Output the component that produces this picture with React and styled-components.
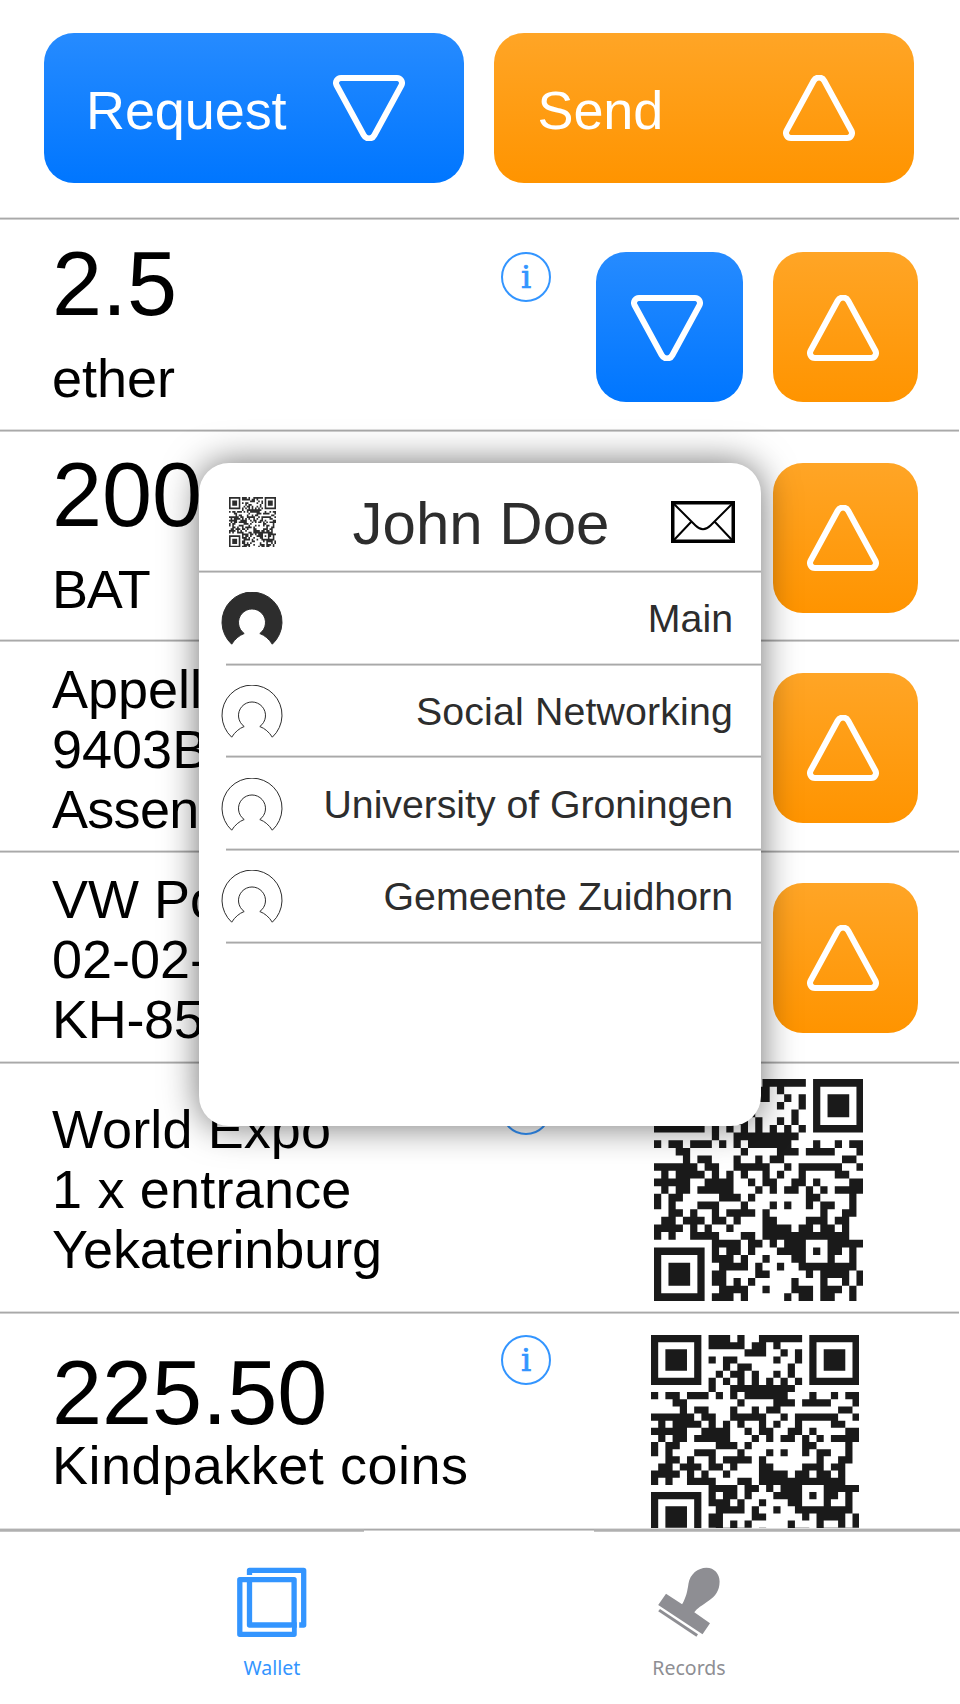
import React from "react";
import styled, { createGlobalStyle, css } from "styled-components";

const GlobalStyle = createGlobalStyle`
  * { box-sizing: border-box; }
  body {
    margin: 0;
    background: #fff;
    color: #000;
    font-family: "Liberation Sans", Arial, Helvetica, sans-serif;
  }
  svg { display: block; flex: none; }
`;

const hairline = css`
  content: "";
  display: block;
  height: 3px;
  background: linear-gradient(#dedede 1px, #a9a9a9 1px, #a9a9a9 2px, #cfcfcf 2px);
`;

const Screen = styled.div`
  position: relative;
  width: 960px;
  height: 1704px;
  overflow: hidden;
  display: flex;
  flex-direction: column;
  background: #fff;
`;

const Header = styled.header`
  flex: none;
  width: 959px;
  height: 220px;
  display: flex;
  flex-direction: column;
  &::after { ${hairline} }
`;

const HeaderActions = styled.div`
  flex: 1;
  display: flex;
  gap: 30px;
  padding: 33px 0 0 44px;
`;

const tones = {
  blue: "linear-gradient(#268bff, #0076ff)",
  orange: "linear-gradient(#ffa526, #ff9400)",
};

const Button = styled.button`
  border: 0;
  border-radius: 30px;
  background: ${(p) => tones[p.$tone]};
  color: #fff;
  font-family: inherit;
  display: flex;
  align-items: center;
`;

const WideButton = styled(Button)`
  width: 420px;
  height: 150px;
  padding: 0 59.5px 0 ${(p) => p.$inset}px;
  justify-content: space-between;
  font-size: 54px;
  line-height: 60px;
`;

const WideLabel = styled.span`
  padding-top: 3px;
  letter-spacing: -0.1px;
`;

const SquareButton = styled(Button)`
  width: ${(p) => p.$width}px;
  height: 150px;
  padding: 1px 6px 0 0;
  justify-content: center;
`;

const Row = styled.section`
  flex: none;
  width: 959px;
  height: ${(p) => p.$height}px;
  overflow: hidden;
  display: flex;
  flex-direction: column;
  &::after { ${(p) => !p.$last && hairline} }
`;

const RowBody = styled.div`
  flex: 1;
  min-height: 0;
  display: grid;
  grid-template-columns: 449px 50px 1fr;
  align-items: start;
  padding-left: 52px;
`;

const Info = styled.div`
  padding-top: ${(p) => p.$top}px;
`;

const Description = styled(Info)`
  white-space: nowrap;
`;

const Amount = styled.div`
  font-size: 90px;
  line-height: 100px;
  margin-bottom: ${(p) => p.$gap}px;
`;

const Line = styled.div`
  font-size: 54px;
  line-height: 60px;
  letter-spacing: ${(p) => p.$tracking || 0}px;
`;

const Actions = styled.div`
  display: flex;
  justify-content: flex-end;
  gap: 30px;
  padding: ${(p) => p.$top}px 41px 0 0;
`;

const CodeSlot = styled.div`
  padding: ${(p) => p.$top}px 0 0 ${(p) => p.$left}px;
`;

const InfoBadge = styled.span`
  width: 50px;
  height: 50px;
  border: 2px solid #3395ff;
  border-radius: 50%;
  display: flex;
  align-items: center;
  justify-content: center;
  color: #3395ff;
  font: 32px/46px "DejaVu Serif", serif;
  -webkit-text-stroke: 0.7px #3395ff;
`;

const TabBar = styled.nav`
  flex: 1;
  display: flex;
  flex-direction: column;
`;

const TabRule = styled.div`
  height: 4px;
  display: grid;
  grid-template-columns: 364px 230px 1fr;
  align-items: start;
`;

const RulePart = styled.i`
  height: ${(p) => (p.$thick ? 4 : 3)}px;
  background: ${(p) =>
    p.$thick
      ? "linear-gradient(#dedede 1px, #b0b0b0 1px, #b0b0b0 3px, #c4c4c4 3px)"
      : "linear-gradient(#dedede 1px, #a9a9a9 1px, #a9a9a9 2px, #cfcfcf 2px)"};
`;

const Tabs = styled.div`
  display: flex;
  padding: 34.5px 0 0 172px;
  gap: 217px;
`;

const Tab = styled.div`
  width: 200px;
  display: flex;
  flex-direction: column;
  align-items: center;
  color: ${(p) => (p.$active ? "#3395ff" : "#8e8e93")};
  font: 19.5px/26px "Noto Sans", sans-serif;
`;

const TabLabel = styled.span`
  margin-top: 18.5px;
`;

const Dialog = styled.div`
  position: absolute;
  left: 199px;
  top: 463px;
  width: 562px;
  height: 663px;
  border-radius: 30px;
  background: #fff;
  color: #2d2d2d;
  box-shadow: 0 0 36px rgba(0, 0, 0, 0.56);
`;

const DialogHeader = styled.div`
  height: 110px;
  display: flex;
  flex-direction: column;
  &::after { ${hairline} }
`;

const DialogBar = styled.div`
  flex: 1;
  display: flex;
  align-items: center;
  justify-content: space-between;
  padding: 11px 26px 0 30px;
`;

const DialogTitle = styled.h1`
  margin: 0;
  padding: 3px 0 0 15px;
  font-size: 60px;
  line-height: 70px;
  font-weight: 400;
`;

const Identity = styled.div`
  height: 92.7px;
  display: flex;
  flex-direction: column;
  &::after {
    ${hairline}
    margin-left: 27px;
  }
`;

const IdentityBody = styled.div`
  flex: 1;
  display: flex;
  align-items: flex-start;
  justify-content: space-between;
  padding: 19.3px 28px 0 21.5px;
`;

const IdentityName = styled.span`
  font-size: 39.3px;
  line-height: 46px;
  padding-top: 3px;
  letter-spacing: ${(p) => p.$tracking || 0}px;
`;

const QR_MODULES = [
  "#######.###.#..######.#######",
  "#.....#.#####.##.#....#.....#",
  "#.###.#......###..#.#.#.###.#",
  "#.###.#.#.##.....#..#.#.###.#",
  "#.###.#...#.##.....#..#.###.#",
  "#.....#..#.##.#..#.#..#.....#",
  "#######.#.#.#.#.#.#.#.#######",
  "........#..#########.........",
  "#.##.###.#.#.######...#..#.##",
  "...##.......#....###.####...#",
  "....#.##...#..#.##........##.",
  "######.##..#####..#.######..#",
  ".#.####.#.#.#..#.#..#....##..",
  "#####..####..#.##..##.#....##",
  ".#.##.#####...#.#.##.#.#.####",
  "#.##.....###.#.......##....#.",
  "#.#...###...#...#.#..#.##..#.",
  "..##.#..#.####.#.......#..##.",
  ".##.###.##.#...##....###.##..",
  "####.#.#..#....####.##.##.#..",
  "#.#..####...##.############..",
  "........####.##.#.###...#####",
  "#######.#.##.#...####.#.##.#.",
  "#.....#.###.#..#...##...#..#.",
  "#.###.#..####.#..#..########.",
  "#.###.#.##....##.....#.####.#",
  "#.###.#.##.#.#.....#...#..#.#",
  "#.....#..####..#...###.###.#.",
  "#######.###.#.....#.##.##..#.",
];

const QR_PATH = QR_MODULES.map((row, y) =>
  [...row.matchAll(/#+/g)]
    .map((run) => `M${run.index} ${y}h${run[0].length}v1h-${run[0].length}z`)
    .join("")
).join("");

const QrCode = ({ width, height, color = "#1a1a1a" }) => (
  <svg width={width} height={height} viewBox="0 0 29 29" preserveAspectRatio="none">
    <path d={QR_PATH} fill={color} />
  </svg>
);

const Triangle = ({ up }) => (
  <svg width="72" height="66" viewBox="0 0 72 66" fill="none" stroke="#fff" strokeWidth="6">
    <path
      transform={up ? "rotate(180 36 33)" : undefined}
      d="M8 3H64A5 5 0 0 1 68.4 10.3L41.3 60.2A6 6 0 0 1 30.7 60.2L3.6 10.3A5 5 0 0 1 8 3Z"
    />
  </svg>
);

const Envelope = () => (
  <svg width="64" height="42" viewBox="0 0 64 42" fill="none" stroke="#000">
    <rect x="1.75" y="1.75" width="60.5" height="38.5" strokeWidth="3.5" />
    <path
      d="M3 3L24.5 24.5Q32 32 39.5 24.5L61 3M3 39L20.5 20.5M61 39L43.5 20.5"
      strokeWidth="2"
    />
  </svg>
);

const Avatar = ({ filled }) => (
  <svg width="62" height="54" viewBox="0 0 62 54">
    <path
      d="M10.7 52.2A30 30 0 1 1 51.3 52.2Q46.5 44.5 38.8 41.5A13.5 13.5 0 1 0 23.2 41.5Q15.5 44.5 10.7 52.2Z"
      fill={filled ? "#2d2d2d" : "none"}
      stroke="#2d2d2d"
      strokeWidth="1"
    />
  </svg>
);

const WalletIcon = () => (
  <svg width="70" height="70" viewBox="0 0 70 70" fill="none" strokeWidth="5.3" strokeLinejoin="round">
    <rect x="12.5" y="3.4" width="54.2" height="54.6" stroke="#3395ff" />
    <path d="M8 9.2H61V62" stroke="#fff" strokeWidth="2.4" strokeLinejoin="miter" />
    <rect x="2.8" y="12.7" width="54.3" height="54.6" stroke="#3395ff" />
    <path d="M54.4 60.700V64.600" stroke="#fff" strokeWidth="1" />
  </svg>
);

const StampIcon = () => (
  <svg width="62" height="70" viewBox="0 0 62 70" fill="#8e8e93">
    <path d="M8 26.7L24.1 37.3C28.3 30 29.3 24.5 30.5 16.5C32 7 40 .7 48.4 .7C56.500 .7 61.600 7 61.600 14.500C61.600 23.500 57.500 29 51 33.500C44 38.500 38.800 41.500 36.300 45.300L52 56.300L44.500 67.300L.2 38Z" />
    <path d="M2 42L40 67.300L38.400 69.700L.2 44.300Z" />
  </svg>
);

const RequestButton = () => (
  <SquareButton $tone="blue" $width={147}><Triangle /></SquareButton>
);

const SendButton = () => (
  <SquareButton $tone="orange" $width={145}><Triangle up /></SquareButton>
);

const assets = [
  {
    height: 212, top: 32.3, textTop: 13.5, amount: "2.5", gap: 14.5, request: true,
    lines: [{ text: "ether" }],
  },
  {
    height: 210, top: 30.5, textTop: 13, amount: "200", gap: 13.5, request: true,
    lines: [{ text: "BAT", tracking: -1.2 }],
  },
  {
    height: 211, top: 30.5, textTop: 17,
    lines: [{ text: "Appell" }, { text: "9403B" }, { text: "Assen", tracking: -0.7 }],
  },
  {
    height: 211, top: 29.5, textTop: 15.5,
    lines: [{ text: "VW Polo" }, { text: "02-02-" }, { text: "KH-85", tracking: -0.3 }],
  },
  {
    height: 250, top: 21, textTop: 35,
    lines: [
      { text: "World Expo", tracking: 0.1 },
      { text: "1 x entrance", tracking: 0.2 },
      { text: "Yekaterinburg", tracking: -0.1 },
    ],
    code: { top: 15, left: 102.5, width: 209.7, height: 222 },
  },
  {
    height: 214, top: 21, textTop: 28.5, amount: "225.50", gap: -7.5, last: true,
    lines: [{ text: "Kindpakket coins", tracking: 0.52 }],
    code: { top: 21, left: 99.5, width: 208.7, height: 207 },
  },
];

const AssetRow = ({ height, top, textTop, amount, gap, lines, request, code, last }) => (
  <Row $height={height} $last={last}>
    <RowBody>
      <Description $top={textTop}>
        {amount && <Amount $gap={gap}>{amount}</Amount>}
        {lines.map((line) => (
          <Line key={line.text} $tracking={line.tracking}>{line.text}</Line>
        ))}
      </Description>
      <Info $top={top}><InfoBadge>i</InfoBadge></Info>
      {code ? (
        <CodeSlot $top={code.top} $left={code.left}>
          <QrCode width={code.width} height={code.height} />
        </CodeSlot>
      ) : (
        <Actions $top={top}>
          {request && <RequestButton />}
          <SendButton />
        </Actions>
      )}
    </RowBody>
  </Row>
);

const identities = [
  { name: "Main" },
  { name: "Social Networking", tracking: 0.15 },
  { name: "University of Groningen", tracking: -0.05 },
  { name: "Gemeente Zuidhorn" },
];

export default function App() {
  return (
    <>
      <GlobalStyle />
      <Screen>
        <Header>
          <HeaderActions>
            <WideButton $tone="blue" $inset={42}><WideLabel>Request</WideLabel><Triangle /></WideButton>
            <WideButton $tone="orange" $inset={43.5}><WideLabel>Send</WideLabel><Triangle up /></WideButton>
          </HeaderActions>
        </Header>
        {assets.map((asset) => <AssetRow key={asset.lines[0].text} {...asset} />)}
        <TabBar>
          <TabRule><RulePart $thick /><RulePart /><RulePart $thick /></TabRule>
          <Tabs>
            <Tab $active><WalletIcon /><TabLabel>Wallet</TabLabel></Tab>
            <Tab><StampIcon /><TabLabel>Records</TabLabel></Tab>
          </Tabs>
        </TabBar>
        <Dialog>
          <DialogHeader>
            <DialogBar>
              <QrCode width={47} height={50.5} color="#2d2d2d" />
              <DialogTitle>John Doe</DialogTitle>
              <Envelope />
            </DialogBar>
          </DialogHeader>
          {identities.map(({ name, tracking }, i) => (
            <Identity key={name}>
              <IdentityBody>
                <Avatar filled={i === 0} />
                <IdentityName $tracking={tracking}>{name}</IdentityName>
              </IdentityBody>
            </Identity>
          ))}
        </Dialog>
      </Screen>
    </>
  );
}
